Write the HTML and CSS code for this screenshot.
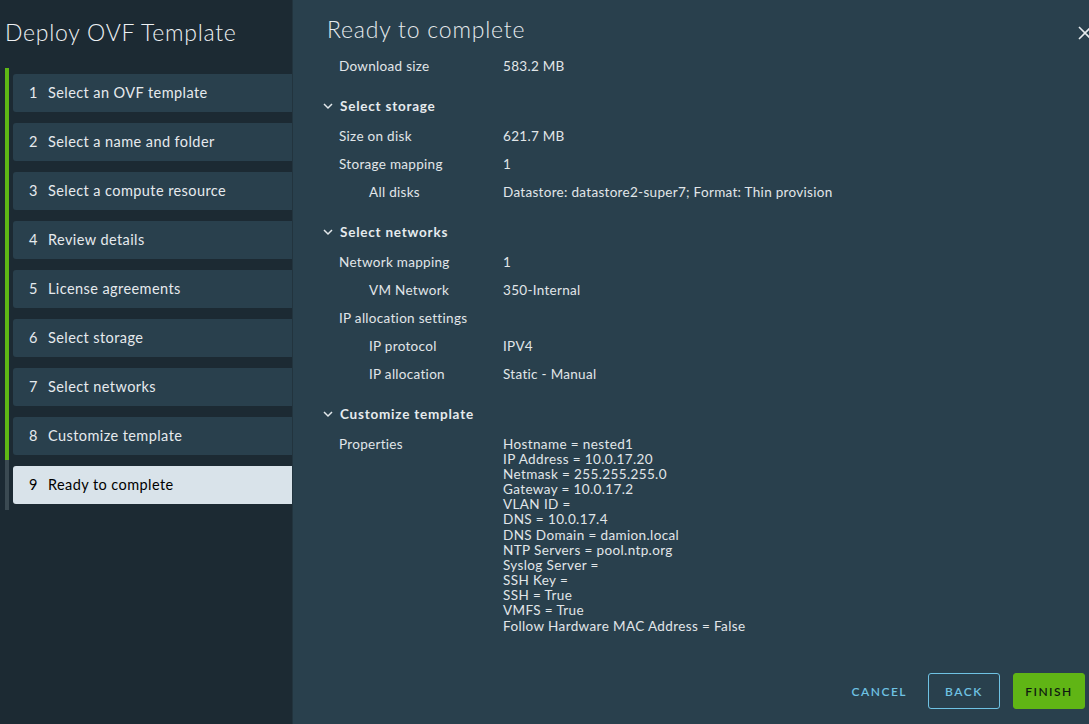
FILE: index.html
```html
<!DOCTYPE html>
<html>
<head>
<meta charset="utf-8">
<link rel="stylesheet" href="styles.css">
</head>
<body>
<div class="app">
  <aside class="sidebar">
    <h1 class="wiz-title">Deploy OVF Template</h1>
    <ol class="steps">
      <li class="step"><span class="num">1</span>Select an OVF template</li>
      <li class="step"><span class="num">2</span>Select a name and folder</li>
      <li class="step"><span class="num">3</span>Select a compute resource</li>
      <li class="step"><span class="num">4</span>Review details</li>
      <li class="step"><span class="num">5</span>License agreements</li>
      <li class="step"><span class="num">6</span>Select storage</li>
      <li class="step"><span class="num">7</span>Select networks</li>
      <li class="step"><span class="num">8</span>Customize template</li>
      <li class="step active"><span class="num">9</span>Ready to complete</li>
    </ol>
  </aside>
  <main class="main">
    <header class="main-head">
      <h2 class="page-title">Ready to complete</h2>
    </header>
    <svg class="close" width="16" height="16" viewBox="0 0 16 16"><path d="M2 2 L14 14 M14 2 L2 14" stroke="#e6ebee" stroke-width="1.6" fill="none"/></svg>
    <section class="content">
      <div class="row"><span class="label">Download size</span><span class="value">583.2 MB</span></div>

      <div class="section"><svg class="chev" width="10" height="10" viewBox="0 0 10 10"><path d="M1 3 L5 7 L9 3" stroke="#e3e8eb" stroke-width="1.5" fill="none"/></svg>Select storage</div>
      <div class="row"><span class="label">Size on disk</span><span class="value">621.7 MB</span></div>
      <div class="row"><span class="label">Storage mapping</span><span class="value">1</span></div>
      <div class="row"><span class="label sub">All disks</span><span class="value">Datastore: datastore2-super7; Format: Thin provision</span></div>

      <div class="section"><svg class="chev" width="10" height="10" viewBox="0 0 10 10"><path d="M1 3 L5 7 L9 3" stroke="#e3e8eb" stroke-width="1.5" fill="none"/></svg>Select networks</div>
      <div class="row"><span class="label">Network mapping</span><span class="value">1</span></div>
      <div class="row"><span class="label sub">VM Network</span><span class="value">350-Internal</span></div>
      <div class="row"><span class="label">IP allocation settings</span><span class="value"></span></div>
      <div class="row"><span class="label sub">IP protocol</span><span class="value">IPV4</span></div>
      <div class="row"><span class="label sub">IP allocation</span><span class="value">Static - Manual</span></div>

      <div class="section"><svg class="chev" width="10" height="10" viewBox="0 0 10 10"><path d="M1 3 L5 7 L9 3" stroke="#e3e8eb" stroke-width="1.5" fill="none"/></svg>Customize template</div>
      <div class="row"><span class="label">Properties</span>
        <span class="value multi">Hostname = nested1<br>IP Address = 10.0.17.20<br>Netmask = 255.255.255.0<br>Gateway = 10.0.17.2<br>VLAN ID =<br>DNS = 10.0.17.4<br>DNS Domain = damion.local<br>NTP Servers = pool.ntp.org<br>Syslog Server =<br>SSH Key =<br>SSH = True<br>VMFS = True<br>Follow Hardware MAC Address = False</span>
      </div>
    </section>
    <footer class="footer">
      <button class="btn flat">Cancel</button>
      <button class="btn outline">Back</button>
      <button class="btn primary">Finish</button>
    </footer>
  </main>
</div>
</body>
</html>
```

FILE: styles.css
```css
* { box-sizing: border-box; }
html, body { margin: 0; padding: 0; }
body {
  width: 1089px;
  height: 724px;
  overflow: hidden;
  font-family: Lato, "Noto Sans", sans-serif;
  background: #29404d;
  color: #e3e8eb;
}
.app { display: flex; height: 724px; }

.sidebar {
  width: 293px;
  flex: none;
  background: #1c2a33;
  border-right: 1px solid #22343e;
  display: flex;
  flex-direction: column;
}
.wiz-title {
  margin: 0;
  padding: 19px 0 0 5px;
  height: 68px;
  font-size: 23px;
  font-weight: 300;
  line-height: 26px;
  color: #eef1f3;
  letter-spacing: 0.75px;
}
.steps {
  list-style: none;
  margin: 0 0 0 5px;
  padding: 6px 0 6px 8px;
  display: flex;
  flex-direction: column;
  gap: 11px;
  background:
    linear-gradient(#5eb715, #5eb715) 0 0 / 4px 392px no-repeat,
    linear-gradient(#3b4a52, #3b4a52) 0 0 / 4px 100% no-repeat;
}
.step {
  height: 38px;
  display: flex;
  align-items: center;
  padding-left: 16px;
  background: #29404d;
  border-radius: 3px 0 0 3px;
  font-size: 14.5px;
  color: #e6eaed;
  letter-spacing: 0.42px;
  padding-bottom: 1px;
}
.step .num { width: 19px; flex: none; }
.step.active { background: #d9e3ea; color: #000; }

.main {
  flex: 1;
  display: flex;
  flex-direction: column;
  position: relative;
  padding-left: 34px;
  padding-right: 4px;
}
.main-head { height: 52px; padding-top: 15px; }
.page-title {
  margin: 0;
  font-size: 23px;
  font-weight: 300;
  line-height: 28px;
  color: #e6ebee;
  letter-spacing: 0.8px;
}
.close { position: absolute; right: -4px; top: 25px; }

.content { flex: 1; font-size: 13.5px; letter-spacing: 0.3px; }
.row { display: flex; min-height: 28px; line-height: 28px; }
.label { width: 176px; flex: none; padding-left: 12px; color: #e1e6e9; }
.label.sub { padding-left: 42px; }
.value { color: #e1e6e9; }
.value.multi { line-height: 15.17px; padding-top: 6.5px; letter-spacing: 0.38px; }
.section {
  margin-top: 12px;
  margin-bottom: 2px;
  height: 28px;
  line-height: 28px;
  display: flex;
  align-items: center;
  font-weight: 700;
  color: #e6ebee;
  letter-spacing: 0.78px;
}
.chev { margin: 0 7px 0 -4px; }

.footer {
  display: flex;
  justify-content: flex-end;
  align-items: center;
  gap: 13px;
  padding-bottom: 15px;
}
.btn {
  height: 36px;
  font-family: Lato, "Noto Sans", sans-serif;
  font-size: 12px;
  font-weight: 600;
  letter-spacing: 1.5px;
  text-transform: uppercase;
  border-radius: 3px;
  cursor: pointer;
}
.btn.flat { background: none; border: none; color: #6fc2e3; padding: 0 8px; margin-right: 0; }
.btn.outline { background: none; border: 1px solid #6fc2e3; color: #6fc2e3; width: 72px; }
.btn.primary { background: #60b515; border: 1px solid #60b515; color: #0f1a10; width: 72px; }
```
